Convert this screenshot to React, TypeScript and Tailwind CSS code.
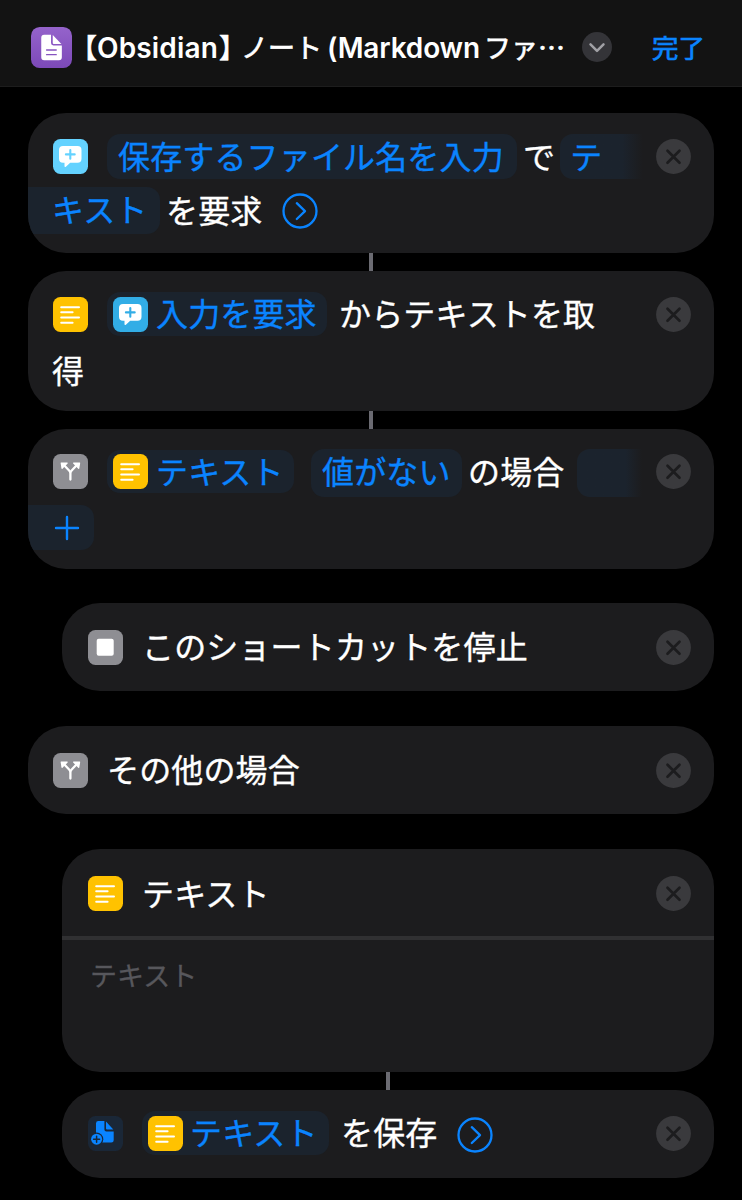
import React from 'react';

type IconProps = { className?: string };

function TextIcon({ className = '' }: IconProps) {
  return (
    <svg viewBox="0 0 35 35" className={`w-[35px] h-[35px] shrink-0 ${className}`}>
      <rect width="35" height="35" rx="7.5" fill="#ffc200" />
      <g stroke="#fff" strokeWidth="2" strokeLinecap="round">
        <path d="M8.2 10.2H26M8.2 15.3H19.6M8.2 20.5H26M8.2 25.7H19.6" />
      </g>
    </svg>
  );
}

function AskIcon({ color, className = '' }: IconProps & { color: string }) {
  return (
    <svg viewBox="0 0 35 35" className={`w-[35px] h-[35px] shrink-0 ${className}`}>
      <rect width="35" height="35" rx="7.5" fill={color} />
      <path
        d="M10 7h14.5a4 4 0 0 1 4 4v8.8a4 4 0 0 1-4 4h-7.3l-4.3 3.9c-.8.7-1.4.3-1.4-.5v-3.4H10a4 4 0 0 1-4-4V11a4 4 0 0 1 4-4Z"
        fill="#fff"
      />
      <path d="M17.3 11v8.8M12.9 15.4h8.8" stroke={color} strokeWidth="2.1" strokeLinecap="round" />
    </svg>
  );
}

function BranchIcon() {
  return (
    <svg viewBox="0 0 35 35" className="w-[35px] h-[35px] shrink-0">
      <rect width="35" height="35" rx="7.5" fill="#8e8e93" />
      <path
        d="M17.4 25.6v-6c0-1.3-.4-2.200-1.300-3.100l-5-5.200M17.400 19.600c0-1.300.4-2.200 1.300-3.100l5-5.200"
        fill="none"
        stroke="#fff"
        strokeWidth="2.300"
        strokeLinecap="round"
      />
      <path
        d="M8.200 9h6l-5.100 5.300ZM26.600 9h-6l5.100 5.300Z"
        fill="#fff"
        stroke="#fff"
        strokeWidth="1.200"
        strokeLinejoin="round"
      />
    </svg>
  );
}

function StopIcon() {
  return (
    <svg viewBox="0 0 35 35" className="w-[35px] h-[35px] shrink-0">
      <rect width="35" height="35" rx="7.5" fill="#8e8e93" />
      <rect x="8.7" y="8.8" width="17" height="17" rx="2" fill="#fff" />
    </svg>
  );
}

function SaveIcon() {
  return (
    <svg viewBox="0 0 35 35" className="w-[35px] h-[35px] shrink-0">
      <rect width="35" height="35" rx="7.5" fill="#1a2737" />
      <path
        d="M10.400 5h6v8.400a2 2 0 0 0 2 2h7.300v8.800a2.400 2.400 0 0 1-2.400 2.400H10.400a2.400 2.400 0 0 1-2.400-2.400V7.400A2.400 2.400 0 0 1 10.400 5Z"
        fill="#0a84ff"
      />
      <path d="M18 5.600l7.300 7.800H19a1 1 0 0 1-1-1Z" fill="#0a84ff" />
      <circle cx="8.600" cy="23.200" r="6.700" fill="#1a2737" />
      <circle cx="8.600" cy="23.200" r="5.500" fill="#0a84ff" />
      <path d="M8.600 20.200v6M5.600 23.200h6" stroke="#1a2737" strokeWidth="1.500" strokeLinecap="round" />
    </svg>
  );
}

function NoteIcon() {
  return (
    <svg viewBox="0 0 42 42" className="w-[41px] h-[41px] shrink-0">
      <defs>
        <linearGradient id="note" x1="0" y1="0" x2="0" y2="1">
          <stop offset="0" stopColor="#9563cb" />
          <stop offset="1" stopColor="#7c49b8" />
        </linearGradient>
      </defs>
      <rect width="42" height="42" rx="9" fill="url(#note)" />
      <path
        d="M13.500 8h7v8.500a2.500 2.500 0 0 0 2.500 2.500h8.600v12a3 3 0 0 1-3 3H13.500a3 3 0 0 1-3-3V11a3 3 0 0 1 3-3Z"
        fill="#fff"
      />
      <path d="M22.300 8.300l8.800 9h-7.800a1 1 0 0 1-1-1Z" fill="#fff" />
      <path d="M16 23.500h9.800M16 28.300h9.800" stroke="#8653c0" strokeWidth="1.500" strokeLinecap="round" />
    </svg>
  );
}

function CloseButton() {
  return (
    <button className="ml-auto shrink-0" aria-label="close">
      <svg viewBox="0 0 35 35" className="block w-[35px] h-[35px]">
        <circle cx="17.5" cy="17.5" r="17.4" fill="#3a3a3d" />
        <path d="M11.500 11.700l12 12M23.500 11.700l-12 12" stroke="#1c1c1e" strokeWidth="2.700" strokeLinecap="round" />
      </svg>
    </button>
  );
}

function MoreButton({ className = '' }: IconProps) {
  return (
    <button className={`shrink-0 ${className}`} aria-label="more">
      <svg viewBox="0 0 36 36" className="block w-[36px] h-[36px]" fill="none" stroke="#0a84ff" strokeWidth="2.300">
        <circle cx="18" cy="18" r="16.500" />
        <path d="M14.800 10.200l8.200 7.900-8.200 7.900" strokeLinecap="round" strokeLinejoin="round" />
      </svg>
    </button>
  );
}

function Label({ children, className = '' }: { children: React.ReactNode; className?: string }) {
  return (
    <span
      className={`block shrink-0 whitespace-nowrap text-[32px] leading-none pb-[4px] tracking-[0.15px] [-webkit-text-stroke:0.35px] ${className}`}
    >
      {children}
    </span>
  );
}

function Chip({ children, className = '' }: { children?: React.ReactNode; className?: string }) {
  return (
    <div className={`flex items-center shrink-0 bg-[#1b232d] text-[#0a84ff] ${className}`}>{children}</div>
  );
}

function Card({ children, className = '' }: { children: React.ReactNode; className?: string }) {
  return (
    <section className={`shrink-0 rounded-[38px] bg-[#1c1c1e] overflow-hidden ${className}`}>{children}</section>
  );
}

function Connector({ className = '' }: IconProps) {
  return <div className={`w-[4px] h-[18px] shrink-0 bg-[#6b6b72] ${className}`} />;
}

export default function App() {
  return (
    <div className="w-[742px] h-[1200px] overflow-hidden bg-black text-white font-['Noto_Sans_CJK_JP',sans-serif]">
      <header className="flex items-center h-[87px] pt-[8px] pl-[31px] bg-[#131313] border-b border-[#1d1d1d]">
        <NoteIcon />
        <h1 className="flex items-center ml-[14px] h-[42px] w-[481px] pt-[2px] text-[27px] leading-none whitespace-nowrap">
          <span className="w-[11px] flex justify-end pb-[3px] [font-feature-settings:'halt'] [-webkit-text-stroke:0.6px]">【</span>
          <span className="w-[122px] font-['Inter'] font-semibold text-[28px] tracking-[0.15px]">Obsidian</span>
          <span className="w-[22px] pb-[3px] [font-feature-settings:'halt'] [-webkit-text-stroke:0.6px]">】</span>
          <span className="w-[86px] pb-[3px] [-webkit-text-stroke:0.7px]">ノート</span>
          <span className="w-[157px] font-['Inter'] font-semibold text-[28px] tracking-[-0.15px]">(Markdown</span>
          <span className="pb-[3px] [-webkit-text-stroke:0.7px]">ファ…</span>
        </h1>
        <svg viewBox="0 0 30 30" className="w-[30px] h-[30px] ml-[15px] shrink-0">
          <circle cx="15" cy="15" r="15" fill="#343438" />
          <path d="M8.500 12.300l6.500 6.500 6.500-6.500" fill="none" stroke="#a0a0a5" strokeWidth="2.500" strokeLinecap="round" strokeLinejoin="round" />
        </svg>
        <button className="ml-[40px] text-[26.5px] leading-none text-[#0a84ff] whitespace-nowrap [-webkit-text-stroke:0.7px]">
          完了
        </button>
      </header>

      <main className="flex flex-col pt-[26px] pl-[28px] pr-[28px]">
        <Card className="h-[140px] pt-[21px]">
          <div className="flex items-center h-[45px] pl-[25px] pr-[23px]">
            <AskIcon color="#64d2ff" />
            <Chip className="w-[410px] h-[45px] ml-[19px] pl-[11px] rounded-[13px]">
              <Label>保存するファイル名を入力</Label>
            </Chip>
            <Label className="ml-[6px]">で</Label>
            <Chip className="w-[83px] h-[45px] ml-[5px] pl-[10px] rounded-l-[13px] bg-transparent bg-linear-to-r from-[#1b232d] from-75% to-[#1c1c1e]">
              <Label>テ</Label>
            </Chip>
            <CloseButton />
          </div>
          <div className="flex items-center h-[47px] mt-[8px]">
            <Chip className="w-[132px] h-[47px] pl-[24px] pb-[1px] rounded-r-[13px]">
              <Label>キスト</Label>
            </Chip>
            <Label className="ml-[6px]">を要求</Label>
            <MoreButton className="ml-[20px]" />
          </div>
        </Card>
        <Connector className="ml-[341px]" />

        <Card className="h-[140px] pt-[21px]">
          <div className="flex items-center h-[44px] pl-[25px] pr-[23px]">
            <TextIcon />
            <Chip className="w-[220px] h-[44px] ml-[19px] pl-[6px] rounded-[13px]">
              <AskIcon color="#32ade6" />
              <Label className="ml-[8px]">入力を要求</Label>
            </Chip>
            <Label className="ml-[12px]">からテキストを取</Label>
            <CloseButton />
          </div>
          <div className="flex items-center h-[44px] mt-[13px] pl-[24px]">
            <Label>得</Label>
          </div>
        </Card>
        <Connector className="ml-[341px]" />

        <Card className="h-[140px] pt-[20px]">
          <div className="flex items-center h-[47px] pl-[25px] pr-[23px] pb-[2px]">
            <BranchIcon />
            <Chip className="w-[187px] h-[43px] ml-[19px] pl-[6px] rounded-[13px]">
              <TextIcon />
              <Label className="ml-[8px]">テキスト</Label>
            </Chip>
            <Chip className="w-[151px] h-[48px] ml-[17px] mt-[2px] pl-[11px] pb-[2px] rounded-[13px]">
              <Label>値がない</Label>
            </Chip>
            <Label className="ml-[6px]">の場合</Label>
            <Chip className="w-[65px] h-[48px] ml-[13px] mt-[2px] rounded-l-[13px] bg-transparent bg-linear-to-r from-[#1b232d] from-75% to-[#1c1c1e]" />
            <CloseButton />
          </div>
          <Chip className="w-[66px] h-[45px] mt-[9px] pl-[26px] rounded-r-[13px]">
            <svg viewBox="0 0 26 26" className="w-[26px] h-[26px]">
              <path d="M13 2v22M2 13h22" stroke="#0a84ff" strokeWidth="2.400" strokeLinecap="round" />
            </svg>
          </Chip>
        </Card>

        <Card className="flex items-center h-[88px] mt-[34px] ml-[34px] pl-[26px] pr-[23px]">
          <StopIcon />
          <Label className="ml-[19px]">このショートカットを停止</Label>
          <CloseButton />
        </Card>

        <Card className="flex items-center h-[88px] mt-[35px] pl-[25px] pr-[23px]">
          <BranchIcon />
          <Label className="ml-[19px]">その他の場合</Label>
          <CloseButton />
        </Card>

        <Card className="h-[223px] mt-[35px] ml-[34px]">
          <div className="flex items-center h-[87px] pt-[2px] pl-[26px] pr-[23px]">
            <TextIcon />
            <Label className="ml-[19px]">テキスト</Label>
            <CloseButton />
          </div>
          <div className="h-[136px] pt-[21px] pl-[28px] border-t-[4px] border-[#303032] text-[27px] leading-none text-[#57575c] [-webkit-text-stroke:0.3px]">
            テキスト
          </div>
        </Card>
        <Connector className="ml-[358px]" />

        <Card className="flex items-center h-[88px] ml-[34px] pl-[26px] pr-[23px] pb-[2px]">
          <SaveIcon />
          <Chip className="w-[187px] h-[44px] ml-[19px] pl-[6px] rounded-[13px]">
            <TextIcon />
            <Label className="ml-[7px]">テキスト</Label>
          </Chip>
          <Label className="ml-[12px]">を保存</Label>
          <MoreButton className="ml-[20px] mt-[3px]" />
          <CloseButton />
        </Card>
      </main>
    </div>
  );
}
